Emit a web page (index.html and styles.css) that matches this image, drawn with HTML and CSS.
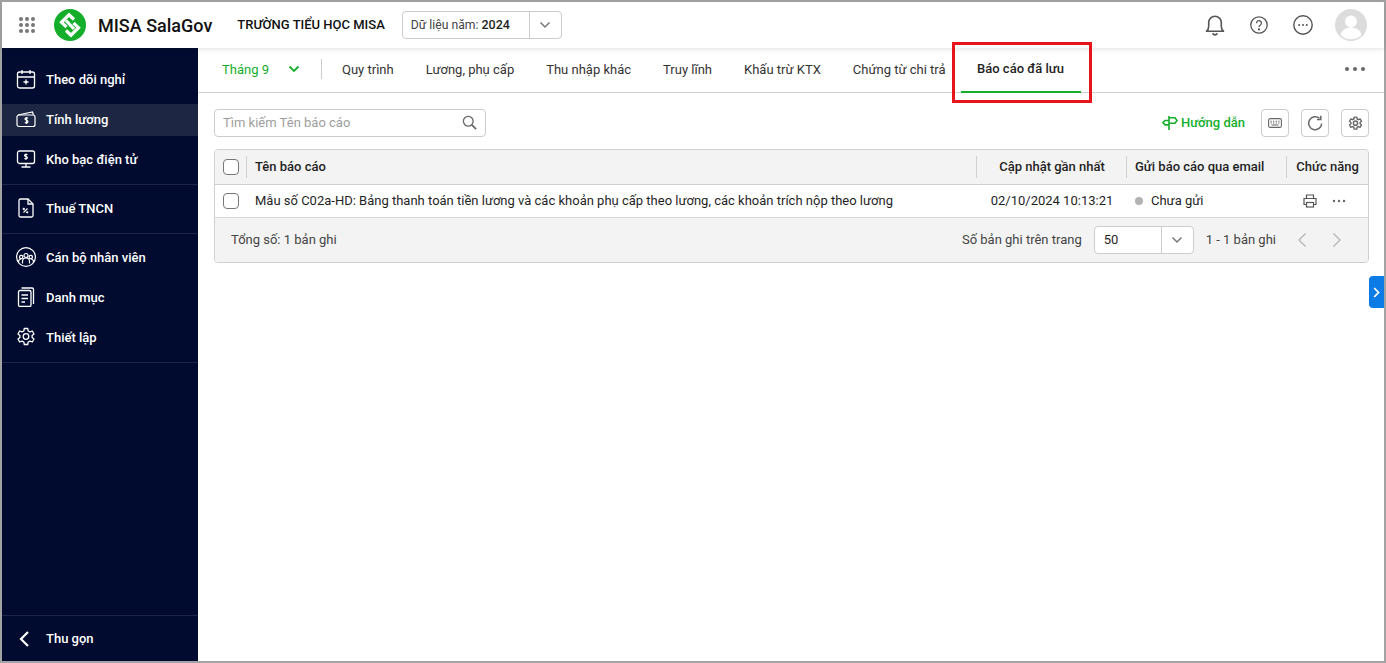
FILE: index.html
```html
<!DOCTYPE html>
<html lang="en">
<head>
  <meta charset="UTF-8" />
  <title>MISA SalaGov</title>
  <link rel="stylesheet" href="styles.css">
</head>
<body>
<div class="frame">

  <!-- Top bar -->
  <header class="topbar">
    <svg class="apps" width="18" height="18" viewBox="0 0 18 18" fill="#777">
      <circle cx="3" cy="3" r="2"/><circle cx="9" cy="3" r="2"/><circle cx="15" cy="3" r="2"/>
      <circle cx="3" cy="9" r="2"/><circle cx="9" cy="9" r="2"/><circle cx="15" cy="9" r="2"/>
      <circle cx="3" cy="15" r="2"/><circle cx="9" cy="15" r="2"/><circle cx="15" cy="15" r="2"/>
    </svg>
    <svg class="logo" width="32" height="32" viewBox="0 0 32 32">
      <circle cx="16" cy="16" r="16" fill="#14ae2b"/>
      <g fill="none" stroke="#fff" stroke-width="3.200">
        <path d="M20 10.500 15 5.800 7.500 13.300 12.500 18"/>
        <path d="M12 21.500 17 26.200 24.500 18.700 19.500 14"/>
        <path d="M12 11.500 20 20"/>
      </g>
    </svg>
    <span class="brand">MISA SalaGov</span>
    <span class="school">TRƯỜNG TIỂU HỌC MISA</span>
    <div class="year-select">
      <span class="year-label">Dữ liệu năm: <b>2024</b></span>
      <span class="select-arrow">
        <svg width="12" height="8" viewBox="0 0 12 8" fill="none" stroke="#777" stroke-width="1.500"><path d="M1.500 1.500 6 6l4.500-4.500"/></svg>
      </span>
    </div>
    <div class="top-icons">
      <svg width="22" height="22" viewBox="0 0 22 22" fill="none" stroke="#555" stroke-width="1.600"><path d="M2.500 17.200c1.600-1.200 2.200-2.600 2.200-5V8.600a6.300 6.300 0 0 1 12.600 0v3.600c0 2.400.6 3.800 2.200 5z" stroke-linejoin="round"/><path d="M8.800 19.200c.4 1.100 1.200 1.700 2.200 1.700s1.800-.6 2.200-1.700" stroke-width="1.800"/></svg>
      <svg width="18" height="18" viewBox="0 0 18 18" fill="none" stroke="#555" stroke-width="1.300"><circle cx="9" cy="9" r="8.200"/><path d="M6.600 7.200A2.400 2.400 0 1 1 10.400 9c-.9.6-1.400 1-1.400 2.100"/><circle cx="9" cy="13.400" r=".5" fill="#555"/></svg>
      <svg class="dots" width="20" height="20" viewBox="0 0 20 20" fill="none" stroke="#555" stroke-width="1.400"><circle cx="10" cy="10" r="9.200"/><g fill="#555" stroke="none"><circle cx="6.200" cy="10" r="1"/><circle cx="10" cy="10" r="1"/><circle cx="13.800" cy="10" r="1"/></g></svg>
      <svg class="avatar" width="32" height="32" viewBox="0 0 32 32"><circle cx="16" cy="16" r="16" fill="#dcdcdc"/><circle cx="16" cy="12.500" r="6" fill="#fff"/><path d="M5.500 26c1-5 5.500-7.500 10.500-7.500S25.500 21 26.500 26A15 15 0 0 1 5.500 26z" fill="#fff"/></svg>
    </div>
  </header>

  <div class="body-row">
    <!-- Sidebar -->
    <nav class="sidebar">
      <div class="nav-group first">
        <a class="nav-item">
          <svg width="20" height="20" viewBox="0 0 20 20" fill="none" stroke="#fff" stroke-width="1.300"><rect x="1.500" y="3" width="17" height="16" rx="2"/><path d="M1.500 8h17M6 1v4M14 1v4M10 10.500v5M7.500 13h5"/></svg>
          <span>Theo dõi nghỉ</span>
        </a>
        <a class="nav-item active">
          <svg width="20" height="18" viewBox="0 0 20 18" fill="none" stroke="#fff" stroke-width="1.200"><rect x="1" y="5" width="18" height="11.500" rx="2"/><path d="M2 5 16.500 2l1 3"/><path d="M12 8.300c-.5-.7-3-.8-3 .7 0 1.600 3 1 3 2.700 0 1.500-2.600 1.300-3 .5M10.500 7v7"/></svg>
          <span>Tính lương</span>
        </a>
        <a class="nav-item">
          <svg width="20" height="20" viewBox="0 0 20 20" fill="none" stroke="#fff" stroke-width="1.300"><rect x="1.500" y="2" width="17" height="12.500" rx="2"/><path d="M10 14.500V18M5.500 18h9"/><path d="M11.500 5.700c-.5-.6-3-.7-3 .7 0 1.500 3 .9 3 2.400 0 1.300-2.600 1.200-3 .4M10 4.500v6.500" stroke-width="1.100"/></svg>
          <span>Kho bạc điện tử</span>
        </a>
      </div>
      <div class="nav-group">
        <a class="nav-item">
          <svg width="20" height="20" viewBox="0 0 20 20" fill="none" stroke="#fff" stroke-width="1.300"><path d="M4.500 1h7.500l5 5v11.500a1.500 1.500 0 0 1-1.500 1.500h-11A1.500 1.500 0 0 1 3 17.500v-15A1.500 1.500 0 0 1 4.500 1z"/><path d="M12 1v5h5"/><path d="M7.500 14.500l4-4" stroke-width="1.100"/><circle cx="7.800" cy="11" r=".5"/><circle cx="11.200" cy="14.300" r=".5"/></svg>
          <span>Thuế TNCN</span>
        </a>
      </div>
      <div class="nav-group">
        <a class="nav-item">
          <svg width="20" height="20" viewBox="0 0 20 20" fill="none" stroke="#fff" stroke-width="1.200"><circle cx="10" cy="10" r="9.400"/><circle cx="10" cy="8.500" r="2"/><circle cx="5.200" cy="10" r="1.700"/><circle cx="14.800" cy="10" r="1.700"/><path d="M6.500 16.500v-2a3.500 3.500 0 0 1 7 0v2M2.500 15c0-2 1-3 2.700-3M17.500 15c0-2-1-3-2.700-3"/></svg>
          <span>Cán bộ nhân viên</span>
        </a>
        <a class="nav-item">
          <svg width="20" height="20" viewBox="0 0 20 20" fill="none" stroke="#fff" stroke-width="1.300"><rect x="2.500" y="3.500" width="12.500" height="16" rx="1.500"/><path d="M5.500 1h10.500a1.500 1.500 0 0 1 1.500 1.500V17"/><path d="M5.500 8h6.500M5.500 11.500h6.500M5.500 15h3.500"/></svg>
          <span>Danh mục</span>
        </a>
        <a class="nav-item">
          <svg width="20" height="20" viewBox="0 0 20 20" fill="none" stroke="#fff" stroke-width="1.300"><path d="M8.300 1.500h3.400l.5 2.500 1.700.9 2.400-.9 1.700 3-1.900 1.600v1.800l1.900 1.600-1.700 3-2.400-.9-1.700.9-.5 2.500H8.300l-.5-2.500-1.700-.9-2.400.9-1.700-3 1.900-1.600V8.600L2 7l1.700-3 2.400.9 1.700-.9z" stroke-linejoin="round"/><circle cx="10" cy="9.500" r="2.800"/></svg>
          <span>Thiết lập</span>
        </a>
      </div>
      <div class="nav-foot">
        <a class="nav-item">
          <svg width="20" height="20" viewBox="0 0 20 20" fill="none" stroke="#fff" stroke-width="2.200"><path d="M12 3 5 10l7 7"/></svg>
          <span>Thu gọn</span>
        </a>
      </div>
    </nav>

    <!-- Main content -->
    <main class="content">
      <div class="tabs">
        <div class="month">
          <span>Tháng 9</span>
          <svg width="12" height="8" viewBox="0 0 12 8" fill="none" stroke="#14ae2b" stroke-width="1.800"><path d="M1.500 1.500 6 6l4.500-4.500"/></svg>
        </div>
        <a class="tab">Quy trình</a>
        <a class="tab">Lương, phụ cấp</a>
        <a class="tab">Thu nhập khác</a>
        <a class="tab">Truy lĩnh</a>
        <a class="tab">Khấu trừ KTX</a>
        <a class="tab">Chứng từ chi trả</a>
        <a class="tab selected">Báo cáo đã lưu</a>
        <svg class="tabs-more" width="22" height="6" viewBox="0 0 22 6" fill="#666"><circle cx="3" cy="3" r="2"/><circle cx="11" cy="3" r="2"/><circle cx="19" cy="3" r="2"/></svg>
      </div>

      <div class="toolbar">
        <div class="search">
          <span>Tìm kiếm Tên báo cáo</span>
          <svg width="15" height="15" viewBox="0 0 16 16" fill="none" stroke="#666" stroke-width="1.400"><circle cx="6.700" cy="6.700" r="5.200"/><path d="m10.500 10.500 4.500 4.500" stroke-width="1.800"/></svg>
        </div>
        <a class="guide">
          <svg width="16" height="16" viewBox="0 0 16 16" fill="none" stroke="#14ae2b" stroke-width="1.600"><path d="M7 15V1M7 2.800h6l2 2.700-2 2.700H7M7 5.500H3L1 7.700l2 2.200h4"/></svg>
          Hướng dẫn
        </a>
        <button class="tool-btn">
          <svg width="14" height="10" viewBox="0 0 14 10" fill="none" stroke="#666" stroke-width="1.100"><rect x=".6" y=".6" width="12.800" height="8.800" rx="1.500"/><path d="M2.500 3.300h1.300M5 3.300h1.300M7.700 3.300H9M10.200 3.300h1.300M2.500 5h1.300M5 5h1.300M7.700 5H9M10.200 5h1.300M3.500 7h7"/></svg>
        </button>
        <button class="tool-btn">
          <svg width="16" height="16" viewBox="0 0 16 16" fill="none" stroke="#666" stroke-width="1.500"><path d="M14.700 8.500A6.500 6.500 0 1 1 12.500 3.300"/><path d="M13.800 .8v3.800H10"/></svg>
        </button>
        <button class="tool-btn">
          <svg width="15" height="15" viewBox="0 0 20 20" fill="none" stroke="#666" stroke-width="1.900"><path d="M8.300 1.500h3.400l.5 2.500 1.700.9 2.400-.9 1.700 3-1.900 1.600v1.800l1.900 1.600-1.700 3-2.400-.9-1.700.9-.5 2.500H8.300l-.5-2.500-1.700-.9-2.400.9-1.700-3 1.900-1.600V8.600L2 7l1.700-3 2.400.9 1.700-.9z" stroke-linejoin="round"/><circle cx="10" cy="9.500" r="2.800"/></svg>
        </button>
      </div>

      <div class="report-table">
        <div class="row head">
          <div class="cell check"><i class="checkbox"></i></div>
          <div class="cell name">Tên báo cáo</div>
          <div class="cell updated">Cập nhật gần nhất</div>
          <div class="cell email">Gửi báo cáo qua email</div>
          <div class="cell actions">Chức năng</div>
        </div>
        <div class="row">
          <div class="cell check"><i class="checkbox"></i></div>
          <div class="cell name">Mẫu số C02a-HD: Bảng thanh toán tiền lương và các khoản phụ cấp theo lương, các khoản trích nộp theo lương</div>
          <div class="cell updated">02/10/2024 10:13:21</div>
          <div class="cell email"><i class="dot"></i>Chưa gửi</div>
          <div class="cell actions">
            <svg width="14" height="14" viewBox="0 0 14 14" fill="none" stroke="#555" stroke-width="1.200"><path d="M3.500 4.500V1h7v3.500M3.500 10.500H1V4.500h12v6h-2.500"/><rect x="3.500" y="8.500" width="7" height="4.500"/></svg>
            <svg width="14" height="4" viewBox="0 0 14 4" fill="#666"><circle cx="2" cy="2" r="1.200"/><circle cx="7" cy="2" r="1.200"/><circle cx="12" cy="2" r="1.200"/></svg>
          </div>
        </div>
        <div class="table-foot">
          <span>Tổng số: 1 bản ghi</span>
          <span class="per-page">Số bản ghi trên trang</span>
          <div class="page-select">
            <span class="page-value">50</span>
            <span class="select-arrow">
              <svg width="12" height="8" viewBox="0 0 12 8" fill="none" stroke="#777" stroke-width="1.500"><path d="M1.500 1.500 6 6l4.500-4.500"/></svg>
            </span>
          </div>
          <span class="range">1 - 1 bản ghi</span>
          <svg class="pager" width="10" height="16" viewBox="0 0 10 16" fill="none" stroke="#bbb" stroke-width="1.500"><path d="M8.500 1.500 2 8l6.500 6.500"/></svg>
          <svg class="pager" width="10" height="16" viewBox="0 0 10 16" fill="none" stroke="#bbb" stroke-width="1.500"><path d="M1.500 1.500 8 8l-6.500 6.500"/></svg>
        </div>
      </div>

      <a class="side-handle">
        <svg width="7" height="11" viewBox="0 0 7 11" fill="none" stroke="#fff" stroke-width="1.800"><path d="m1.200 1 4.300 4.500L1.200 10"/></svg>
      </a>
    </main>
  </div>

  <!-- Red highlight around the tab -->
  <div class="highlight"></div>
</div>
</body>
</html>
```
FILE: styles.css
```css
* {
  box-sizing: border-box;
}

html, body {
  margin: 0;
  height: 100%;
  overflow: hidden;
}

body {
  font-family: Roboto, 'Liberation Sans', sans-serif;
  font-size: 13px;
  color: #1f1f1f;
  background: #fff;
}

.frame {
  position: relative;
  width: 1386px;
  height: 663px;
  border: 2px solid #a3a3a3;
  display: flex;
  flex-direction: column;
}

/* top bar */
.topbar {
  height: 46px;
  flex: none;
  display: flex;
  align-items: center;
  padding-left: 16px;
  background: #fff;
  position: relative;
  z-index: 2;
  box-shadow: 0 1px 5px rgba(0, 0, 0, 0.12);
}

.logo {
  margin-left: 18px;
}

.brand {
  margin-left: 12px;
  font-size: 18px;
  font-weight: 500;
  color: #111;
}

.school {
  margin-left: 25px;
  padding-bottom: 1px;
  font-size: 13px;
  font-weight: 500;
  color: #111;
}

.year-select {
  margin-left: 17px;
  width: 160px;
  height: 28px;
  border: 1px solid #ccc;
  border-radius: 4px;
  display: flex;
  align-items: center;
}

.year-label {
  flex: 1;
  padding-left: 8px;
  padding-bottom: 1px;
  font-size: 12.200px;
  color: #444;
}

.year-label b {
  font-size: 12.500px;
  font-weight: 500;
  color: #1f1f1f;
}

.select-arrow {
  width: 32px;
  height: 100%;
  border-left: 1px solid #ccc;
  display: flex;
  align-items: center;
  justify-content: center;
}

.top-icons {
  margin-left: auto;
  margin-right: 17px;
  display: flex;
  align-items: center;
}

.top-icons svg {
  margin-left: 24px;
}

.top-icons .dots {
  margin-left: 25px;
}

.top-icons .avatar {
  margin-left: 22px;
}

.body-row {
  flex: 1;
  display: flex;
  min-height: 0;
}

/* sidebar */
.sidebar {
  width: 196px;
  flex: none;
  background: #000b2f;
  color: #fff;
  display: flex;
  flex-direction: column;
}

.nav-group {
  padding: 3px 0 5px;
  border-bottom: 1px solid #1c2545;
}

.nav-group.first {
  padding-top: 11px;
}

.nav-item {
  height: 40px;
  display: flex;
  align-items: center;
  gap: 10px;
  padding-left: 14px;
  font-weight: 500;
  font-size: 13px;
}

.nav-item svg {
  flex: none;
  width: 20px;
}

.nav-item.active {
  height: 32px;
  margin: 5px 0 3px;
  padding-bottom: 2px;
  background: #1d2743;
}

.nav-foot {
  margin-top: auto;
  height: 46px;
  border-top: 1px solid #1c2545;
  display: flex;
  align-items: center;
}

/* tabs */
.content {
  flex: 1;
  min-width: 0;
  position: relative;
  padding: 0 15px 0 16px;
}

.tabs {
  height: 45px;
  margin: 0 -15px 0 -16px;
  padding-left: 24px;
  border-bottom: 1px solid #d0d0d0;
  display: flex;
  align-items: flex-start;
  color: #333;
}

.month {
  width: 100px;
  height: 20px;
  margin-top: 11px;
  display: flex;
  align-items: center;
  justify-content: space-between;
  padding-right: 21px;
  border-right: 1px solid #ccc;
  color: #14ae2b;
  margin-right: 20px;
}

.tab {
  height: 42px;
  display: flex;
  align-items: center;
  margin-right: 32px;
  white-space: nowrap;
}

.tab.selected {
  width: 120px;
  height: 45px;
  margin: 0 0 0 -17px;
  padding-bottom: 3px;
  justify-content: center;
  font-weight: 500;
  color: #1f1f1f;
  border-bottom: 2px solid #14ae2b;
}

.tabs-more {
  margin-left: auto;
  margin-right: 18px;
  margin-top: 18px;
}

/* toolbar */
.toolbar {
  margin-top: 16px;
  height: 28px;
  display: flex;
  align-items: center;
}

.search {
  width: 272px;
  height: 28px;
  border: 1px solid #ccc;
  border-radius: 4px;
  padding: 0 8px 1px 8px;
  display: flex;
  align-items: center;
  justify-content: space-between;
  color: #9e9e9e;
}

.guide {
  margin-left: auto;
  margin-right: 16px;
  padding-bottom: 1px;
  display: flex;
  align-items: center;
  gap: 3px;
  font-weight: 500;
  color: #14ae2b;
}

.tool-btn {
  width: 28px;
  height: 28px;
  padding: 0;
  margin-left: 12px;
  background: #fff;
  border: 1px solid #ccc;
  border-radius: 4px;
  display: flex;
  align-items: center;
  justify-content: center;
}

.guide + .tool-btn {
  margin-left: 0;
}

/* table */
.report-table {
  margin-top: 12px;
  border: 1px solid #d0d0d0;
  border-radius: 4px;
  overflow: hidden;
}

.row {
  display: grid;
  grid-template-columns: 32px 730px 150px 160px 1fr;
  height: 33px;
  border-bottom: 1px solid #d8d8d8;
}

.row.head {
  height: 35px;
  background: #f3f3f3;
  font-weight: 500;
  border-bottom-color: #d0d0d0;
}

.cell {
  display: flex;
  align-items: center;
  padding: 0 8px 1px;
  position: relative;
  white-space: nowrap;
}

.head .cell + .cell::before {
  content: "";
  position: absolute;
  left: -1px;
  top: 6px;
  bottom: 6px;
  border-left: 1px solid #d0d0d0;
}

.cell.check {
  padding: 0 0 0 8px;
}

.checkbox {
  display: block;
  width: 16px;
  height: 16px;
  border: 1px solid #777;
  border-radius: 4px;
  background: #fff;
}

.cell.updated {
  justify-content: center;
  padding-left: 0;
  padding-right: 0;
}

.row.head .cell.updated {
  font-weight: 500;
}

.cell.actions {
  justify-content: center;
}

.row:not(.head) .cell.actions {
  gap: 15px;
  padding: 0 0 0 16px;
  justify-content: flex-start;
}

.dot {
  width: 8px;
  height: 8px;
  border-radius: 50%;
  background: #b2b2b2;
  margin-right: 8px;
}

.table-foot {
  height: 44px;
  background: #f3f3f3;
  padding: 0 0 1px 16px;
  display: flex;
  align-items: center;
  color: #444;
}

.per-page {
  margin-left: auto;
  margin-right: 12px;
}

.page-select {
  width: 100px;
  height: 28px;
  background: #fff;
  border: 1px solid #ccc;
  border-radius: 4px;
  display: flex;
  align-items: center;
}

.page-value {
  flex: 1;
  padding-left: 9px;
  color: #1f1f1f;
}

.range {
  margin: 0 21px 0 12px;
}

.pager {
  margin-right: 25px;
}

.pager:last-child {
  margin-right: 26px;
}

/* small blue handle on right edge */
.side-handle {
  position: absolute;
  right: 0;
  top: 228px;
  width: 15px;
  height: 32px;
  background: #0d7be6;
  border-radius: 4px 0 0 4px;
  display: flex;
  align-items: center;
  justify-content: center;
}

.highlight {
  position: absolute;
  left: 950px;
  top: 40px;
  width: 140px;
  height: 61px;
  border: 3px solid #e8141c;
  pointer-events: none;
  z-index: 3;
}
```
